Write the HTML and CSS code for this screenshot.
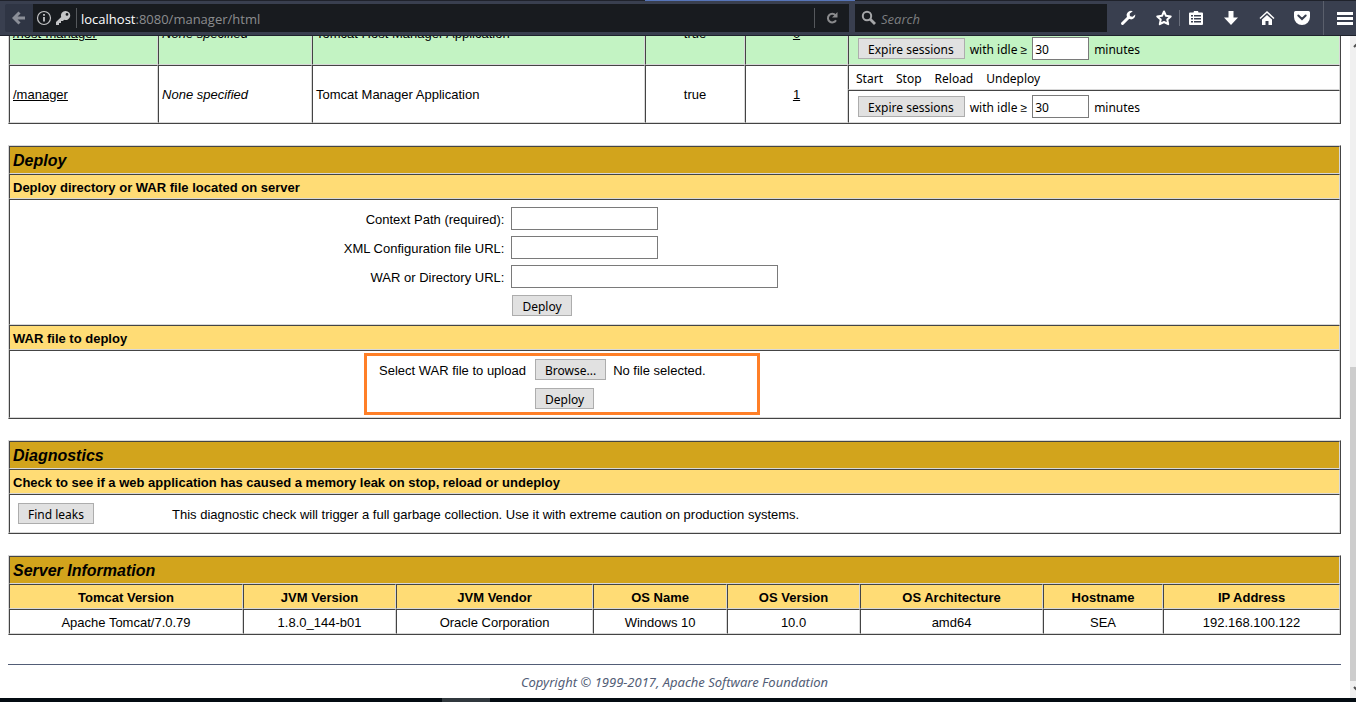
FILE: index.html
```html
<!DOCTYPE html>
<html lang="en">
<head>
<meta charset="utf-8">
<title>/manager</title>
<link rel="stylesheet" href="styles.css">
</head>
<body>
<header class="toolbar">
  <div class="tab-edge"><span class="tab-active"></span></div>
  <nav class="bar">
    <button class="back" aria-label="Back"><svg width="14" height="14" viewBox="0 0 14 14"><path d="M7.500 1.500 2 7l5.500 5.500M2.500 7H13" fill="none" stroke="#8b8f98" stroke-width="3"/></svg></button>
    <div class="url-field">
      <svg width="16" height="16" viewBox="0 0 16 16"><circle cx="8" cy="8" r="6.500" fill="none" stroke="#c4c5c7" stroke-width="1.200"/><path d="M8 7v4.500M8 4v1.700" stroke="#c4c5c7" stroke-width="1.800"/></svg>
      <svg width="16" height="16" viewBox="0 0 16 16"><path fill-rule="evenodd" d="M10.500 1a4.500 4.500 0 0 0-4.300 5.900L1 12v3h3v-2h2v-2h2l1.100-1.300A4.500 4.500 0 1 0 10.500 1zm1.500 2a1.400 1.400 0 1 1 0 2.800A1.400 1.400 0 0 1 12 3z" fill="#c4c5c7"/></svg>
      <span class="field-rule"></span>
      <span class="url" role="textbox" aria-label="Address"><b>localhost</b>:8080/manager/html</span>
      <span class="field-rule"></span>
      <button class="reload" aria-label="Reload"><svg width="14" height="14" viewBox="0 0 14 14"><path d="M10.500 4.300A4.300 4.300 0 1 0 11 9.200" fill="none" stroke="#8a8b8d" stroke-width="2"/><path d="M12.500 1v5.500H7z" fill="#8a8b8d"/></svg></button>
    </div>
    <label class="search-field">
      <svg width="16" height="16" viewBox="0 0 16 16"><circle cx="6" cy="6" r="4.200" fill="none" stroke="#a5a6a8" stroke-width="2"/><path d="M9 9l5 5" stroke="#a5a6a8" stroke-width="2.800"/></svg>
      <input type="text" placeholder="Search" aria-label="Search">
    </label>
    <div class="tools">
      <button aria-label="Developer tools"><svg width="16" height="16" viewBox="0 0 16 16"><path d="M2.500 13.500 9 7" stroke="#fff" stroke-width="3" stroke-linecap="round"/><path d="M12.800 1.200A4.300 4.300 0 1 0 15.200 4.500L12.500 6.800 9.800 6.200 9.800 3.500z" fill="#fff"/></svg></button>
      <button aria-label="Bookmark"><svg width="16" height="16" viewBox="0 0 16 16"><path d="M8 1.500l2 4.300 4.700.6-3.400 3.200.9 4.600L8 12l-4.200 2.200.9-4.600L1.300 6.400 6 5.800z" fill="none" stroke="#fff" stroke-width="2" stroke-linejoin="round"/></svg></button>
      <span class="tool-rule"></span>
      <button aria-label="Bookmarks list"><svg width="16" height="16" viewBox="0 0 16 16"><path fill-rule="evenodd" d="M2 2.500h3.500L6 1h4l.5 1.500H14a1 1 0 0 1 1 1V14a1 1 0 0 1-1 1H2a1 1 0 0 1-1-1V3.500a1 1 0 0 1 1-1zM3 5v1.600h2V5zm3 0v1.600h7V5zM3 8v1.600h2V8zm3 0v1.600h7V8zM3 11v1.600h2V11zm3 0v1.600h7V11z" fill="#fff"/></svg></button>
      <button aria-label="Downloads"><svg width="16" height="16" viewBox="0 0 16 16"><path d="M5.500 1h5v6.500H15L8 15 1 7.500h4.500z" fill="#fff"/></svg></button>
      <button aria-label="Home"><svg width="16" height="16" viewBox="0 0 16 16"><path d="M1 8.500 8 2l7 6.500" fill="none" stroke="#fff" stroke-width="1.500"/><path d="M3 9.600l5-4.700 5 4.700V15H9.500v-4h-3v4H3z" fill="#fff"/></svg></button>
      <button aria-label="Pocket"><svg width="16" height="16" viewBox="0 0 16 16"><path d="M1.500 1h13A1.500 1.500 0 0 1 16 2.500V7A8 8 0 0 1 0 7V2.500A1.500 1.500 0 0 1 1.500 1z" fill="#fff"/><path d="M4.300 5.500 8 9l3.700-3.500" fill="none" stroke="#393f4f" stroke-width="2" stroke-linecap="round"/></svg></button>
    </div>
    <button class="menu" aria-label="Menu"><svg width="16" height="16" viewBox="0 0 16 16"><path d="M0 3.500h16M0 8.500h16M0 13.500h16" stroke="#fff" stroke-width="3"/></svg></button>
  </nav>
</header>

<div class="viewport">
<main class="page">
  <table class="apps">
    <colgroup><col class="c-path"><col class="c-version"><col class="c-name"><col class="c-running"><col class="c-sessions"><col></colgroup>
    <tbody class="green">
      <tr>
        <td rowspan="2"><a href="#">/host-manager</a></td>
        <td rowspan="2"><i>None specified</i></td>
        <td rowspan="2">Tomcat Host Manager Application</td>
        <td rowspan="2" class="center">true</td>
        <td rowspan="2" class="center"><a href="#">0</a></td>
        <td class="commands tall"></td>
      </tr>
      <tr>
        <td class="expire-cell"><form class="expire"><button type="button" class="btn">Expire sessions</button><label for="idle-host">with idle ≥</label><input id="idle-host" type="text" value="30"><span>minutes</span></form></td>
      </tr>
    </tbody>
    <tbody>
      <tr>
        <td rowspan="2"><a href="#">/manager</a></td>
        <td rowspan="2"><i>None specified</i></td>
        <td rowspan="2">Tomcat Manager Application</td>
        <td rowspan="2" class="center">true</td>
        <td rowspan="2" class="center"><a href="#">1</a></td>
        <td class="commands"><div class="links"><span>Start</span><span>Stop</span><span>Reload</span><span>Undeploy</span></div></td>
      </tr>
      <tr>
        <td class="expire-cell"><form class="expire"><button type="button" class="btn">Expire sessions</button><label for="idle-manager">with idle ≥</label><input id="idle-manager" type="text" value="30"><span>minutes</span></form></td>
      </tr>
    </tbody>
  </table>

  <table>
    <tr><td class="title">Deploy</td></tr>
    <tr><th class="left">Deploy directory or WAR file located on server</th></tr>
    <tr><td class="form-cell">
      <form class="deploy">
        <label for="path">Context Path (required):</label><input id="path" type="text">
        <label for="config">XML Configuration file URL:</label><input id="config" type="text">
        <label for="war">WAR or Directory URL:</label><input id="war" class="wide" type="text">
        <button type="button" class="btn submit">Deploy</button>
      </form>
    </td></tr>
    <tr><th class="left">WAR file to deploy</th></tr>
    <tr><td class="upload-cell">
      <form class="upload">
        <label for="file">Select WAR file to upload</label>
        <div class="file"><button type="button" class="btn">Browse...</button><input id="file" class="file-input" type="file"><span>No file selected.</span></div>
        <button type="button" class="btn submit">Deploy</button>
      </form>
    </td></tr>
  </table>

  <table>
    <tr><td class="title">Diagnostics</td></tr>
    <tr><th class="left">Check to see if a web application has caused a memory leak on stop, reload or undeploy</th></tr>
    <tr><td class="diag-cell"><form class="diag"><div><button type="button" class="btn">Find leaks</button></div><span>This diagnostic check will trigger a full garbage collection. Use it with extreme caution on production systems.</span></form></td></tr>
  </table>

  <table class="server">
    <colgroup><col class="s1"><col class="s2"><col class="s3"><col class="s4"><col class="s5"><col class="s6"><col class="s7"><col></colgroup>
    <tr><td class="title" colspan="8">Server Information</td></tr>
    <tr><th>Tomcat Version</th><th>JVM Version</th><th>JVM Vendor</th><th>OS Name</th><th>OS Version</th><th>OS Architecture</th><th>Hostname</th><th>IP Address</th></tr>
    <tr class="center"><td>Apache Tomcat/7.0.79</td><td>1.8.0_144-b01</td><td>Oracle Corporation</td><td>Windows 10</td><td>10.0</td><td>amd64</td><td>SEA</td><td>192.168.100.122</td></tr>
  </table>

  <footer class="copyright">Copyright © 1999-2017, Apache Software Foundation</footer>
</main>
<div class="scrollbar">
  <svg class="arrow" width="17" height="17" viewBox="0 0 17 17"><path d="M4 11l4.500-4.500L13 11" fill="none" stroke="#505050" stroke-width="2"/></svg>
  <span class="thumb"></span>
  <svg class="arrow" width="17" height="17" viewBox="0 0 17 17"><path d="M4 6l4.500 4.500L13 6" fill="none" stroke="#505050" stroke-width="2"/></svg>
</div>
</div>
<div class="taskbar"><span></span></div>
</body>
</html>
```

FILE: styles.css
```css
* { box-sizing: border-box; }

body {
  margin: 0;
  height: 100vh;
  display: flex;
  flex-direction: column;
  overflow: hidden;
  background: #fff;
  color: #000;
  font: 13px/15px "Liberation Sans", Arial, sans-serif;
}

button { margin: 0; padding: 0; border: 0; background: none; color: inherit; }
a { color: #000; }
svg { display: block; flex: none; }

/* Browser toolbar */
.toolbar { flex: none; background: #393f4f; border-bottom: 1px solid #1e222c; }
.tab-edge { display: flex; justify-content: flex-end; height: 1px; background: #1f222b; }
.tab-active { width: 210px; margin-right: 501px; background: #5675b9; }
.bar { display: flex; align-items: center; height: 34px; padding: 0 0 0 5px; }
.back { display: grid; place-items: center; width: 28px; height: 28px; background: #2f3544; border-radius: 2px 0 0 2px; }
.url-field {
  flex: 1;
  display: flex;
  align-items: center;
  gap: 3px;
  height: 28px;
  padding: 0 0 0 3px;
  background: #181b1f;
}
.field-rule { width: 1px; height: 20px; background: #55585c; margin: 0 1px 0 2px; }
.url { flex: 1; padding-top: 2px; color: #8c8d8f; font: 13px/20px "Open Sans", sans-serif; }
.url b { color: #fff; font-weight: 400; }
.reload { display: grid; place-items: center; width: 30px; height: 28px; padding-right: 4px; }
.search-field {
  display: flex;
  align-items: center;
  gap: 4px;
  width: 252px;
  height: 28px;
  margin-left: 6px;
  padding: 0 6px;
  background: #181b1f;
}
.search-field input {
  flex: 1;
  min-width: 0;
  padding: 2px 0 0;
  border: 0;
  background: none;
  color: #fff;
  font: italic 13px/20px "Open Sans", sans-serif;
}
.search-field input::placeholder { color: #7d7e80; opacity: 1; }
.tools { display: flex; align-items: center; width: 216px; padding: 0 13px; justify-content: space-between; }
.tool-rule { width: 1px; height: 16px; margin: 0 -12px; background: #6a6f7c; }
.menu { display: grid; place-items: center; width: 33px; height: 34px; border-left: 1px solid #5a5f6c; padding-left: 9px; }

/* Page area, scrolled to its end */
.viewport { flex: 1; min-height: 0; display: flex; overflow: hidden; }
.page {
  flex: 1;
  min-width: 0;
  display: flex;
  flex-direction: column;
  justify-content: flex-end;
  gap: 21px;
  overflow: hidden;
  padding: 0 9px 0 8px;
}
.scrollbar {
  flex: none;
  width: 6px;
  display: grid;
  grid-template-rows: 17px 1fr 17px;
  overflow: hidden;
  background: #f0f0f0;
}
.thumb { align-self: end; height: 50%; background: #cdcdcd; }
.taskbar { flex: none; height: 4px; padding-left: 442px; background: #040c12; }
.taskbar span { display: block; width: 48px; height: 4px; background: #30383d; }

/* Tables */
table {
  flex: none;
  width: 100%;
  table-layout: fixed;
  border: 1px solid;
  border-color: #d8d8d8 #444 #444 #d8d8d8;
  border-collapse: separate;
  border-spacing: 0;
}
td, th {
  height: 25px;
  padding: 4px 3px 2px;
  border: 1px solid;
  border-color: #444 #d8d8d8 #d8d8d8 #444;
  vertical-align: middle;
}
td[rowspan] { padding: 3px; }
th { background: #ffdc75; }
.left { text-align: left; }
.center { text-align: center; }
.green td { background: #c3f3c3; }
.title { height: 28px; padding: 5px 3px 3px; background: #d2a41c; font: italic bold 16px/18px "Liberation Sans", Arial, sans-serif; }

.c-path { width: 11.2%; }
.c-version { width: 11.57%; }
.c-name { width: 25.02%; }
.c-running { width: 7.51%; }
.c-sessions { width: 7.74%; }
.s1 { width: 17.58%; }
.s2 { width: 11.5%; }
.s3 { width: 14.8%; }
.s4 { width: 10.07%; }
.s5 { width: 9.99%; }
.s6 { width: 13.75%; }
.s7 { width: 9.02%; }

/* Controls */
.btn {
  height: 21px;
  padding: 2px 9px 0;
  border: 1px solid #adadad;
  background: #e1e1e1;
  font: 12px/17px "Noto Sans", Tahoma, sans-serif;
  white-space: nowrap;
}
td input[type="text"] {
  width: 147px;
  height: 23px;
  padding: 2px 2px 0;
  border: 1px solid #7a7a7a;
  background: #fff;
  font: 12px/19px "Noto Sans", Tahoma, sans-serif;
}

.commands { padding: 2px 7px 0; }
.tall { height: 30px; }
.links { display: flex; gap: 13px; font: 12px/15px "Noto Sans", Tahoma, sans-serif; }
.expire-cell { height: 33px; padding: 0 8px; }
.expire { display: flex; align-items: center; gap: 5px; font: 12px/15px "Noto Sans", Tahoma, sans-serif; }
.expire .btn { margin-left: 1px; padding: 2px 10px 0 9px; }
.expire label, .expire span { padding-top: 2px; }
td .expire input[type="text"] { width: 57px; }

.form-cell { height: 126px; padding: 7px 0; vertical-align: top; }
.deploy {
  display: grid;
  grid-template-columns: 37.2% 1fr;
  grid-auto-rows: 23px;
  gap: 6px 7px;
  align-items: center;
}
.deploy label { padding-top: 2px; text-align: right; }
td .deploy .wide { width: 267px; }
.deploy .submit { margin-left: 1px; }
.submit { grid-column: 2; justify-self: start; }

.upload-cell { height: 68px; padding: 2px 0 2px 354px; }
.upload {
  display: grid;
  grid-template-columns: 149px 1fr;
  align-content: start;
  align-items: center;
  gap: 8px 7px;
  width: 396px;
  height: 62px;
  padding: 3px 12px;
  border: 3px solid #ff7f27;
}
.upload label, .file span { padding-top: 2px; }
.file { display: flex; align-items: center; gap: 7px; }
.file-input { position: absolute; width: 1px; height: 1px; overflow: hidden; opacity: 0; }

.diag-cell { height: 39px; padding: 0 8px; }
.diag { display: grid; grid-template-columns: 154px 1fr; align-items: center; }
.diag span { padding-top: 2px; }

.copyright {
  margin-top: 8px;
  padding: 10px 0 8px;
  border-top: 1px solid #525d76;
  color: #525d76;
  text-align: center;
  font: italic 13px/15px "Noto Sans", Tahoma, sans-serif;
}
```
